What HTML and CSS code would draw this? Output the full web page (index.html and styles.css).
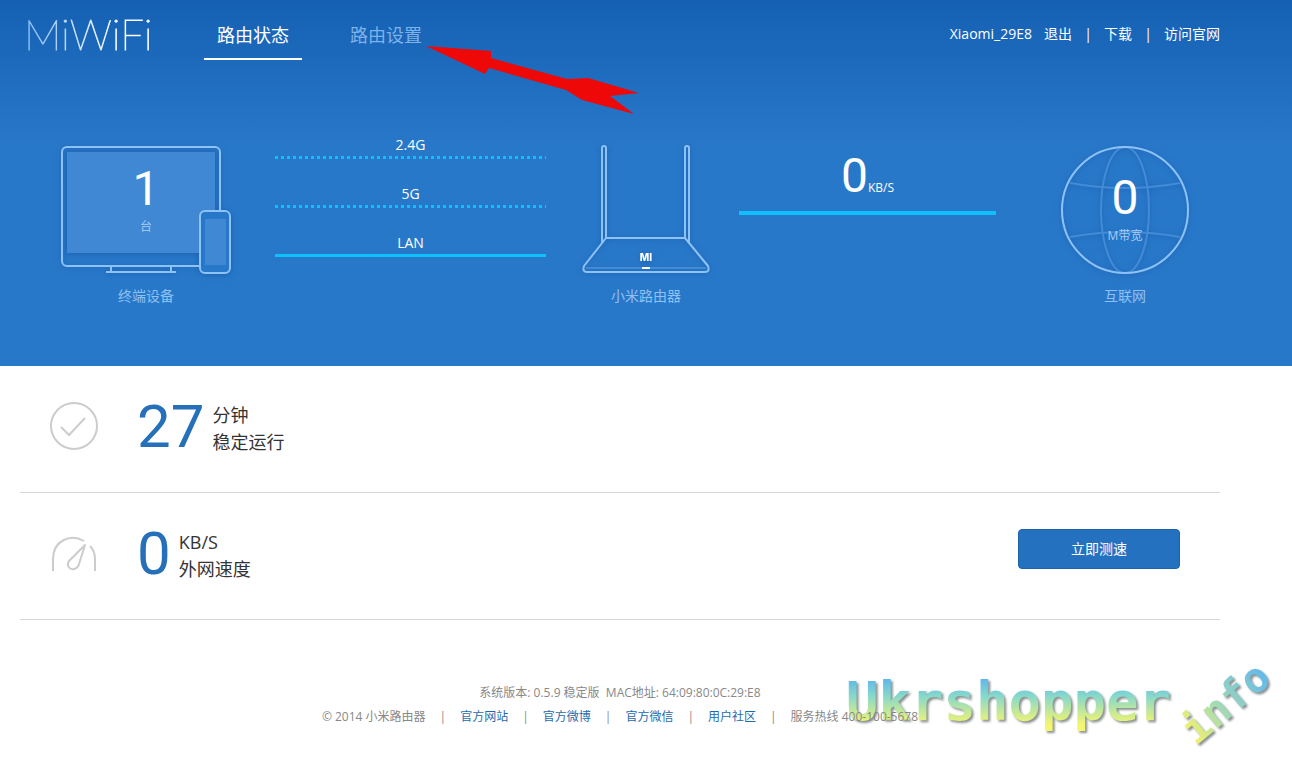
FILE: index.html
```html
<!DOCTYPE html>
<html lang="zh-CN">
<head>
  <meta charset="UTF-8">
  <meta name="viewport" content="width=device-width, initial-scale=1.0">
  <title>小米路由器</title>
  <link rel="stylesheet" href="styles.css">
</head>
<body>

  <header class="header">
    <div class="topbar">
      <a href="#" class="logo">MiWiFi</a>
      <nav class="nav">
        <a href="#" class="active">路由状态</a>
        <a href="#">路由设置</a>
      </nav>
      <div class="user">
        <span class="name">Xiaomi_29E8</span>
        <a href="#">退出</a>
        <span class="sep">|</span>
        <a href="#">下载</a>
        <span class="sep">|</span>
        <a href="#">访问官网</a>
      </div>
    </div>

    <svg class="arrow" width="214" height="70" viewBox="0 0 214 70">
      <path fill="#ee0808" d="M0 0 L65 5 L65 12 L141 33 L162 32 L213 47 L184 50 L208 68 L156 54 L140 44 L63 22 L59 28 Z"/>
    </svg>

    <div class="network">
      <div class="device">
        <div class="device-pic">
          <svg width="170" height="128" viewBox="0 0 170 128" fill="none" stroke="#8dc2f7" stroke-width="2">
            <rect x="6" y="6" width="148" height="101" fill="#4088d3" stroke="none"/>
            <rect x="1" y="1" width="158" height="119" rx="5"/>
            <path d="M45 126 H115 M50 120 V126 M110 120 V126"/>
            <rect x="139" y="65" width="30" height="62" rx="5" fill="#2878ca"/>
            <rect x="144" y="73" width="21" height="46" fill="#4088d3" stroke="none"/>
          </svg>
          <div class="device-text">
            <strong>1</strong>
            <span>台</span>
          </div>
        </div>
        <p>终端设备</p>
      </div>

      <ul class="links">
        <li class="dotted">2.4G</li>
        <li class="dotted">5G</li>
        <li>LAN</li>
      </ul>

      <div class="device">
        <div class="device-pic">
          <svg width="128" height="128" viewBox="0 0 128 128" fill="none" stroke="#8dc2f7" stroke-width="2" stroke-linejoin="round">
            <path d="M20 97 V2 Q20 0 22 0 Q24 0 24 2 V92"/>
            <path d="M103 92 V2 Q103 0 105 0 Q107 0 107 2 V97"/>
            <path d="M24 92 H103 L126 120 Q128 126 123 126 H5 Q0 126 2 120 Z"/>
            <path d="M4 122 H124" stroke-width="1" opacity=".6"/>
            <path d="M60 122 H68" stroke="#fff"/>
            <text x="64" y="115" class="mi">MI</text>
          </svg>
        </div>
        <p>小米路由器</p>
      </div>

      <div class="speed">
        <strong>0</strong><span>KB/S</span>
      </div>

      <div class="device">
        <div class="device-pic">
          <svg width="128" height="128" viewBox="0 0 128 128" fill="none" stroke="#418bd8" stroke-width="2">
            <ellipse cx="64" cy="64" rx="24" ry="63"/>
            <path d="M9 37 Q64 47 119 37 M9 91 Q64 81 119 91"/>
            <circle cx="64" cy="64" r="63" stroke="#8dc2f7"/>
          </svg>
          <div class="device-text globe">
            <strong>0</strong>
            <span>M带宽</span>
          </div>
        </div>
        <p>互联网</p>
      </div>
    </div>
  </header>

  <main class="status">
    <section class="row">
      <svg width="48" height="48" viewBox="0 0 48 48" fill="none" stroke="#ccc" stroke-width="2">
        <circle cx="24" cy="24" r="23"/>
        <path d="M11 25 L19 33 L35 16"/>
      </svg>
      <strong>27</strong>
      <p>分钟<br>稳定运行</p>
    </section>
    <section class="row">
      <svg width="48" height="48" viewBox="0 0 48 48" fill="none" stroke="#ccc" stroke-width="2">
        <path d="M3 42 V30 C3 12 20 4 34 12 M40 17 Q45 22 45 30 V42"/>
        <path d="M35 16 L19 32 C16 37 20 41 24 40 Q28 39 29 35 Z" stroke-linejoin="round"/>
      </svg>
      <strong>0</strong>
      <p>KB/S<br>外网速度</p>
      <button type="button" class="btn">立即测速</button>
    </section>
  </main>

  <footer class="footer">
    <p>系统版本: 0.5.9 稳定版&nbsp; MAC地址: 64:09:80:0C:29:E8</p>
    <p class="footer-links">
      <span>© 2014 小米路由器</span>
      <span>|</span>
      <a href="#">官方网站</a>
      <span>|</span>
      <a href="#">官方微博</a>
      <span>|</span>
      <a href="#">官方微信</a>
      <span>|</span>
      <a href="#">用户社区</a>
      <span>|</span>
      <span>服务热线 400-100-5678</span>
    </p>
    <div class="watermark">
      <span class="mark-name">Ukrshopper</span>
      <span class="mark-info">info</span>
    </div>
  </footer>

</body>
</html>
```
FILE: styles.css
```css
* {
  box-sizing: border-box;
}

body {
  margin: 0;
  font-family: "Open Sans", "Noto Sans CJK SC", sans-serif;
  font-size: 14px;
  line-height: 20px;
  color: #333;
  background: #fff;
}

a {
  text-decoration: none;
}

p, ul {
  margin: 0;
  padding: 0;
}

strong {
  font-family: Roboto, sans-serif;
  font-weight: 400;
}

.header {
  position: relative;
  padding: 0 72px 60px 20px;
  color: #fff;
  background: #2878ca linear-gradient(#1560b3, #2878ca) no-repeat;
  background-size: 100% 146px;
}

/* top bar */
.topbar {
  display: flex;
  height: 60px;
  margin-bottom: 86px;
}

.logo {
  width: 184px;
  padding: 9px 0 0 4px;
  font-family: Lato, sans-serif;
  font-weight: 100;
  font-size: 42px;
  line-height: 50px;
  color: transparent;
  background: linear-gradient(90deg, #7db4f0, #fff 100px);
  -webkit-background-clip: text;
  background-clip: text;
  -webkit-text-stroke: 1px transparent;
}

.nav {
  display: flex;
  gap: 35px;
}

.nav a {
  padding: 12px 13px 0;
  font-size: 18px;
  line-height: 46px;
  color: #7fb2e8;
}

.nav .active {
  color: #fff;
  border-bottom: 2px solid #fff;
}

.user {
  display: flex;
  margin-left: auto;
  padding-top: 24px;
}

.user a {
  color: #fff;
}

.user .name {
  margin-right: 12px;
}

.user .sep {
  width: 32px;
  text-align: center;
}

.arrow {
  position: absolute;
  top: 46px;
  left: 426px;
}

/* network diagram */
.network {
  display: grid;
  grid-template-columns: 170px 1fr 128px 1fr 128px;
  padding: 0 31px 0 41px;
}

.device-pic {
  position: relative;
  height: 128px;
}

.device-pic svg {
  display: block;
  overflow: visible;
  filter: drop-shadow(0 1px 3px rgba(0, 40, 100, 0.3));
}

.device p {
  margin-top: 12px;
  text-align: center;
  color: #8fc0f2;
}

.device-text {
  position: absolute;
  top: 16px;
  left: 0;
  width: 100%;
  text-align: center;
}

.device-text.globe {
  top: 25px;
}

.device-text strong {
  display: block;
  font-size: 48px;
  line-height: 54px;
}

.device-text span {
  font-size: 12px;
  color: #a5cdf5;
}

.mi {
  font-family: Inter, sans-serif;
  font-size: 10px;
  font-weight: 800;
  text-anchor: middle;
  fill: #fff;
  stroke: none;
}

.links {
  padding: 0 36px 0 44px;
  margin-top: -12px;
  list-style: none;
  text-align: center;
}

.links li {
  height: 25px;
  margin-bottom: 24px;
  line-height: 22px;
  border-bottom: 3px solid #10c0fa;
}

.links .dotted {
  background: repeating-linear-gradient(90deg, #10c0fa 0 3px, transparent 3px 6px) bottom / 100% 3px no-repeat;
  border-bottom: 0;
}

.speed {
  height: 69px;
  margin: 0 65px 0 29px;
  text-align: center;
  border-bottom: 4px solid #10c0fa;
}

.speed strong {
  font-size: 48px;
  line-height: 60px;
}

.speed span {
  font-size: 12px;
}

/* status rows */
.status {
  margin: 0 72px 0 20px;
}

.row {
  display: flex;
  align-items: flex-start;
  padding: 36px 40px 36px 30px;
  border-bottom: 1px solid #d6d6d6;
}

.row strong {
  margin: 0 8px 0 39px;
  font-size: 60px;
  line-height: 50px;
  color: #2570b8;
}

.row p {
  font-size: 18px;
  line-height: 27px;
}

.btn {
  width: 162px;
  height: 40px;
  margin-left: auto;
  font: inherit;
  color: #fff;
  background: #2472bf;
  border: 1px solid #1d63a8;
  border-radius: 4px;
  cursor: pointer;
}

/* footer */
.footer {
  position: relative;
  padding: 61px 72px 29px 20px;
  font-size: 12px;
  line-height: 24px;
  text-align: center;
  color: #888;
}

.footer-links {
  position: relative;
  z-index: 1;
  display: flex;
  justify-content: center;
  gap: 14px;
}

.footer a {
  color: #1f6aad;
}

.watermark {
  position: absolute;
  right: 16px;
  bottom: 0;
  width: 430px;
  height: 110px;
  font-family: "DejaVu Sans Mono", monospace;
  font-weight: 700;
  color: transparent;
  filter: drop-shadow(2px 2px 1px rgba(60, 70, 70, 0.6));
}

.mark-name,
.mark-info {
  position: absolute;
  background: linear-gradient(#62b8ec 15%, #85d8cc 40%, #f4f570 85%);
  -webkit-background-clip: text;
  background-clip: text;
}

.mark-name {
  top: 22px;
  left: 0;
  font-size: 54px;
  line-height: 64px;
}

.mark-info {
  top: 30px;
  right: 0;
  font-size: 42px;
  line-height: 50px;
  background-image: linear-gradient(90deg, #f8f368, #a5dcb0 40%, #62b8ec);
  transform: rotate(-40deg);
}
```
